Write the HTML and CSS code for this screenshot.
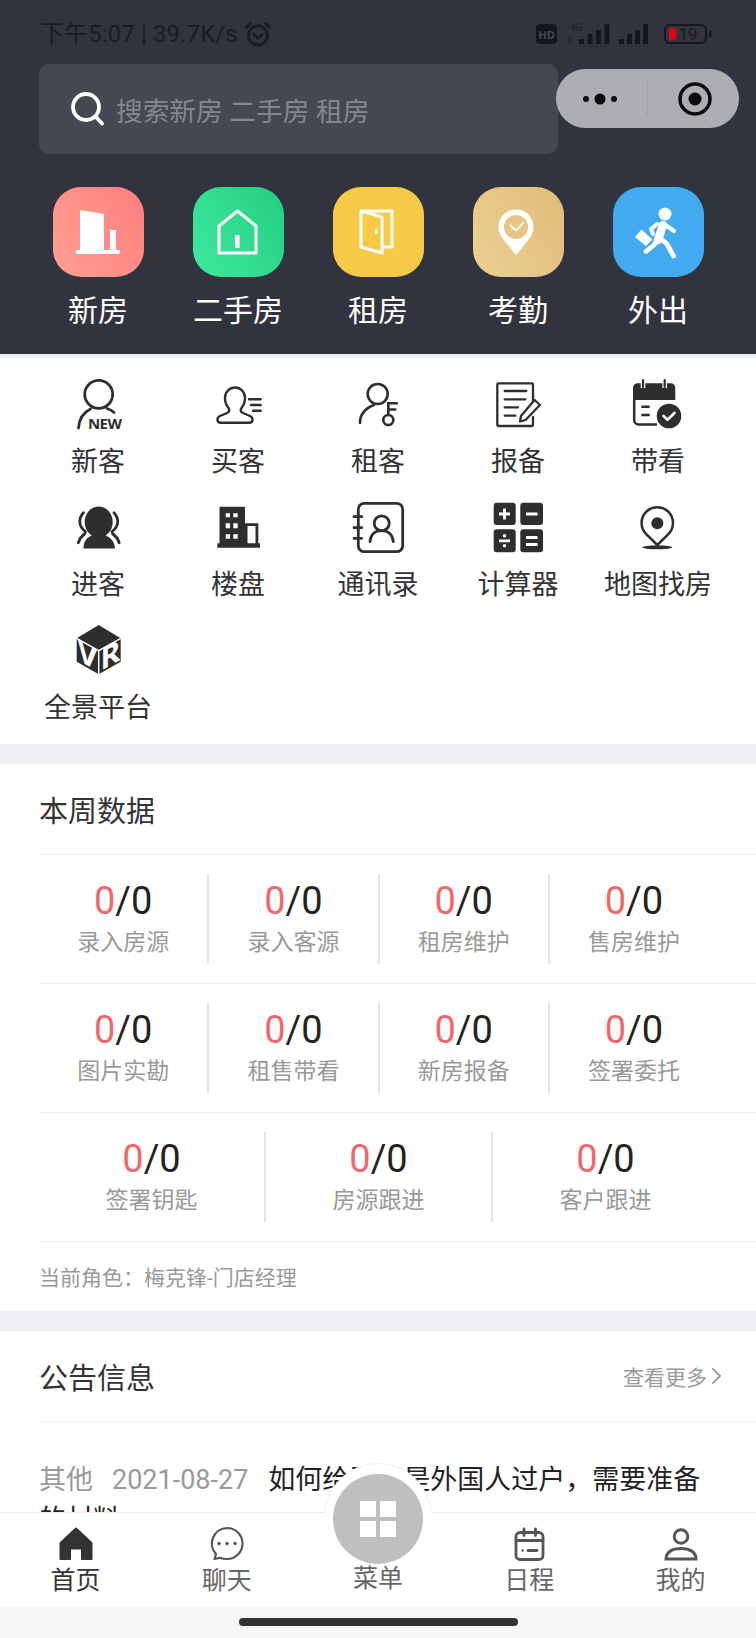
FILE: index.html
```html
<!DOCTYPE html>
<html lang="zh-CN">
<head>
<meta charset="utf-8">
<title>首页</title>
<link rel="stylesheet" href="styles.css">
</head>
<body>
<div class="app">
  <main class="content">
    <header class="hero">
      <div class="statusbar">
        <div class="status-left">
          <span>下午5:07 | 39.7K/s</span>
          <svg class="alarm" viewBox="0 0 28 28" fill="none" stroke="#1b1c22" stroke-width="2.8" stroke-linecap="round" stroke-linejoin="round"><circle cx="14" cy="15.5" r="9.5"/><path d="M9.8 14.5l4.2 4 4.2-4"/><path d="M2.5 7.5l4-4M25.500 7.500l-4-4"/></svg>
        </div>
        <svg class="status-right" viewBox="0 0 180 24" fill="none">
          <rect x="0" y="2" width="21" height="20" rx="4" fill="#15161b"/>
          <text x="10.500" y="16.500" class="hd" text-anchor="middle">HD</text>
          <text x="34" y="9" class="fourg">4G</text>
          <path d="M33 15v7M36 15v7" stroke="#1b1c22" stroke-width="1" opacity=".55"/>
          <g fill="#15161b">
            <rect x="43" y="17" width="5" height="5"/><rect x="51.500" y="12" width="5" height="10"/><rect x="60" y="8" width="5" height="14"/><rect x="68.500" y="2" width="5" height="20"/>
            <rect x="83" y="17" width="5" height="5"/><rect x="91" y="12" width="5" height="10"/><rect x="99" y="8" width="5" height="14"/><rect x="107" y="2" width="5" height="20"/>
          </g>
          <rect x="129" y="3" width="41" height="18" rx="5" stroke="#15161b" stroke-width="2"/>
          <rect x="133" y="6.500" width="7.500" height="11" fill="#e60012"/>
          <text x="142.500" y="18" class="batt">19</text>
          <rect x="173" y="9" width="2.500" height="6" rx="1" fill="#15161b"/>
        </svg>
      </div>
      <div class="search">
        <svg class="search-ico" viewBox="0 0 36 36" fill="none" stroke="#fff" stroke-width="3.800" stroke-linecap="round"><circle cx="16" cy="16" r="13"/><path d="M26 26l6 6.500"/></svg>
        <span>搜索新房 二手房 租房</span>
      </div>
      <div class="capsule">
        <svg class="dots" viewBox="0 0 44 16" fill="#0a0a0a"><circle cx="6" cy="8" r="3"/><circle cx="20" cy="8" r="5.500"/><circle cx="34" cy="8" r="3"/></svg>
        <i class="capsule-sep"></i>
        <svg class="target" viewBox="0 0 36 36" fill="none"><circle cx="18" cy="18" r="15" stroke="#0a0a0a" stroke-width="3.500"/><circle cx="18" cy="18" r="6.500" fill="#0a0a0a"/></svg>
      </div>
      <nav class="quick">
        <a class="quick-item"><span class="tile tile-new"><svg viewBox="0 0 90 90" fill="#fff"><path d="M27 23l24 4v36H27z"/><path d="M57 43h6v20h-6z"/><rect x="23" y="63" width="44" height="4" rx="1"/></svg></span><b>新房</b></a>
        <a class="quick-item"><span class="tile tile-second"><svg viewBox="0 0 90 90" fill="none" stroke="#fff" stroke-width="3" stroke-linejoin="round"><path d="M44.500 24L63 39v27H26V39z"/><rect x="42" y="48" width="4.500" height="13" fill="#fff" stroke="none"/></svg></span><b>二手房</b></a>
        <a class="quick-item"><span class="tile tile-rent"><svg viewBox="0 0 90 90" fill="none" stroke="#fff" stroke-width="3" stroke-linejoin="round"><path d="M28 24h31v36H49"/><path d="M28 24l21 6v36l-21-6z"/><rect x="42" y="42" width="2.500" height="5" rx="1" fill="#fff" stroke="none"/></svg></span><b>租房</b></a>
        <a class="quick-item"><span class="tile tile-check"><svg viewBox="0 0 90 90"><path fill="#fff" d="M43 22.500c-9.700 0-17.500 7.800-17.500 17.500 0 5 2 9.500 5.300 12.800L43 68.500l12.200-15.700c3.300-3.300 5.300-7.800 5.300-12.800 0-9.700-7.800-17.500-17.500-17.500z"/><circle cx="43" cy="40" r="12" fill="#e6c585"/><path d="M37.500 38.500l5.500 5 7.500-8" fill="none" stroke="#fff" stroke-width="1.800" stroke-linecap="round" stroke-linejoin="round"/></svg></span><b>考勤</b></a>
        <a class="quick-item"><span class="tile tile-out"><svg viewBox="0 0 90 90"><circle cx="52" cy="27" r="6.500" fill="#fff"/><path fill="#fff" d="M22 50l6.500-7.500 11 10-6.500 6.500z"/><g fill="none" stroke="#fff" stroke-linecap="round" stroke-linejoin="round"><path d="M50 38l-5 15" stroke-width="8.500"/><path d="M49 36l5 3 7 5M44 37l-6 5 2 5" stroke-width="4"/><path d="M44 53l-3 5-8 6.500M47 51l7 6 6.500 12" stroke-width="4.800"/></g></svg></span><b>外出</b></a>
      </nav>
    </header>

    <section class="menu">
      <a class="menu-item"><svg class="ico" viewBox="0 0 60 60" fill="none" stroke="#2e2e2e" stroke-width="2.800" stroke-linecap="round"><circle cx="30.700" cy="19.300" r="14"/><path d="M10.500 53c.5-9 5-15.500 12-19M39 33.500c3 .8 5 2 7 4"/><text x="20" y="54" class="new" stroke="none" fill="#2e2e2e">NEW</text></svg><span>新客</span></a>
      <a class="menu-item"><svg class="ico" viewBox="0 0 60 60" fill="none" stroke="#2e2e2e" stroke-width="2.400" stroke-linecap="round" stroke-linejoin="round"><path d="M27 12.500c-5.500 0-10 4.500-10 10.500 0 4.500 1.500 7.500 3.500 10 1.500 2 1 4-1.500 5l-7 3c-3.500 1.500-3.500 6.700.8 6.700h28.400c4.300 0 4.300-5.200.8-6.700l-7-3c-2.500-1-3-3-1.500-5 2-2.500 3.500-5.500 3.500-10 0-6-4.500-10.500-10-10.500z"/><path d="M41 24.300h11.700M43 30h9.700M45 35.700h7.700"/></svg><span>买客</span></a>
      <a class="menu-item"><svg class="ico" viewBox="0 0 60 60" fill="none" stroke="#2e2e2e" stroke-width="2.600" stroke-linecap="round"><circle cx="29.700" cy="19" r="10"/><path d="M12 48c0-9 6-15 14-18"/><circle cx="40.300" cy="45" r="5"/><path d="M40.300 40V28.300h8.500M40.300 34.500h7"/></svg><span>租客</span></a>
      <a class="menu-item"><svg class="ico" viewBox="0 0 60 60" fill="none" stroke="#2e2e2e" stroke-width="2.300" stroke-linecap="round" stroke-linejoin="round"><path d="M45 26V9.500c0-.7-.5-1.200-1.200-1.200H10.500c-.7 0-1.200.5-1.200 1.200v40.300c0 .7.500 1.200 1.200 1.200h33.300c.7 0 1.200-.5 1.200-1.200V42"/><path d="M16.700 16h21.600M16.700 24.300h20.600M16.700 32.300h13.300M16.700 40.700h10.600"/><path d="M46.500 25l5.500 5-14.500 15-5.500 1.500 1-5.500z"/></svg><span>报备</span></a>
      <a class="menu-item"><svg class="ico" viewBox="0 0 60 60" fill="none"><path d="M5 25V13c0-2.700 2-4.700 4.700-4.700h33c2.700 0 4.600 2 4.600 4.700v12z" fill="#2e2e2e"/><path d="M15 5v8M36.700 5v8" stroke="#fff" stroke-width="4.500"/><path d="M15 5v7M36.700 5v7" stroke="#2e2e2e" stroke-width="2.200" stroke-linecap="round"/><path d="M6.200 25v20c0 2.500 1.800 4.500 4.500 4.500H29" stroke="#2e2e2e" stroke-width="2.500"/><path d="M13.300 31.700h8.400M13.300 40h8.400" stroke="#2e2e2e" stroke-width="2.500"/><circle cx="41" cy="41" r="12.300" fill="#2e2e2e"/><path d="M35.500 41l4 3.800 7-6.800" stroke="#fff" stroke-width="2.600" stroke-linecap="round" stroke-linejoin="round"/></svg><span>带看</span></a>

      <a class="menu-item"><svg class="ico" viewBox="0 0 60 60"><ellipse cx="30.700" cy="24" rx="14" ry="15.500" fill="#2e2e2e"/><path fill="#2e2e2e" d="M15.500 50.500c0-8 4-11.500 10-13.500 3.500 1.500 7 1.500 10.500 0 6 2 10.500 5.500 11 13.500z"/><path d="M15.500 14.700c-5.500 6-5 13.500 2 19M17 35.500c-3 2.200-5.300 5-6.700 9.200M46 14.700c5.500 6 5 13.500-2 19M44.500 35.500c3 2.200 5.300 5 6.700 9.200" fill="none" stroke="#2e2e2e" stroke-width="2.800" stroke-linecap="round" stroke-linejoin="round"/></svg><span>进客</span></a>
      <a class="menu-item"><svg class="ico" viewBox="0 0 60 60"><path fill="#2e2e2e" d="M12.500 8.700h23.500c.6 0 1 .4 1 1V25.300h13.300v20H52v4.400H9.300v-4.400h2.200V9.700c0-.6.400-1 1-1z"/><path fill="#fff" d="M17.700 15.300H22v4h-4.300zM25.300 15.300h4.400v4h-4.400zM17.700 25.300H22v5h-4.300zM25.300 25.300h4.400v5h-4.400zM17.700 36.300H22v4.500h-4.300zM25.300 36.300h4.400v4.500h-4.400zM39.500 28h8v17.300h-8z"/></svg><span>楼盘</span></a>
      <a class="menu-item"><svg class="ico" viewBox="0 0 60 60" fill="none" stroke="#2e2e2e" stroke-width="2.800" stroke-linecap="round"><rect x="10.300" y="5.300" width="44.400" height="48.400" rx="6"/><path d="M6 18.700h7.700M6 29.700h7.700M6 40.300h7.700"/><circle cx="33.700" cy="25.300" r="7.500"/><path d="M22 43.700c.5-7 5-11 11.500-11s11.300 4 11.800 11"/></svg><span>通讯录</span></a>
      <a class="menu-item"><svg class="ico" viewBox="0 0 60 60"><rect x="5.700" y="4.700" width="22" height="22.300" rx="3" fill="#2e2e2e"/><rect x="32.300" y="4.700" width="22.700" height="22.300" rx="3" fill="#2e2e2e"/><rect x="5.700" y="31.300" width="22" height="23" rx="3" fill="#2e2e2e"/><rect x="32.300" y="31.300" width="22.700" height="23" rx="3" fill="#2e2e2e"/><path d="M11 16h11M16.500 10.500v11M38 16h11.500M11 42.800h11M38 39.500h11.500M38 46.500h11.500" stroke="#fff" stroke-width="2.800"/><circle cx="16.500" cy="37.800" r="1.700" fill="#fff"/><circle cx="16.500" cy="47.800" r="1.700" fill="#fff"/></svg><span>计算器</span></a>
      <a class="menu-item"><svg class="ico" viewBox="0 0 60 60" fill="none"><path d="M29.300 47L18.500 36.300A15.700 15.700 0 1 1 40.100 36.300z" stroke="#2e2e2e" stroke-width="2.500" stroke-linejoin="round"/><circle cx="29.300" cy="25.300" r="6" fill="#2e2e2e"/><ellipse cx="29.300" cy="49.300" rx="15" ry="2" fill="#2e2e2e"/></svg><span>地图找房</span></a>

      <a class="menu-item"><svg class="ico" viewBox="0 0 60 60"><path fill="#2e2e2e" d="M30.700 4l22 13.300v23.400l-22 12.600-22-12.600V17.300z"/><path d="M8.700 17.300l22 12.400 22-12.400M30.700 29.700v23.600" fill="none" stroke="#fff" stroke-width="1.400"/><text class="vr" transform="matrix(1 .56 0 1 9.500 39)" fill="#fff">V</text><text class="vr" transform="matrix(1 -.56 0 1 32.500 50)" fill="#fff">R</text></svg><span>全景平台</span></a>
    </section>

    <section class="panel stats">
      <h2 class="panel-title"><span>本周数据</span></h2>
      <div class="stat-row">
        <div class="stat"><p class="num"><em>0</em>/0</p><p class="cap">录入房源</p></div>
        <div class="stat"><p class="num"><em>0</em>/0</p><p class="cap">录入客源</p></div>
        <div class="stat"><p class="num"><em>0</em>/0</p><p class="cap">租房维护</p></div>
        <div class="stat"><p class="num"><em>0</em>/0</p><p class="cap">售房维护</p></div>
      </div>
      <div class="stat-row">
        <div class="stat"><p class="num"><em>0</em>/0</p><p class="cap">图片实勘</p></div>
        <div class="stat"><p class="num"><em>0</em>/0</p><p class="cap">租售带看</p></div>
        <div class="stat"><p class="num"><em>0</em>/0</p><p class="cap">新房报备</p></div>
        <div class="stat"><p class="num"><em>0</em>/0</p><p class="cap">签署委托</p></div>
      </div>
      <div class="stat-row">
        <div class="stat"><p class="num"><em>0</em>/0</p><p class="cap">签署钥匙</p></div>
        <div class="stat"><p class="num"><em>0</em>/0</p><p class="cap">房源跟进</p></div>
        <div class="stat"><p class="num"><em>0</em>/0</p><p class="cap">客户跟进</p></div>
      </div>
      <p class="role">当前角色：梅克锋-门店经理</p>
    </section>

    <section class="panel notice">
      <h2 class="panel-title"><span>公告信息</span><a class="more">查看更多<svg viewBox="0 0 12 20" fill="none" stroke="#999" stroke-width="2" stroke-linecap="round" stroke-linejoin="round"><path d="M2 2l8 8-8 8"/></svg></a></h2>
      <p class="notice-item"><span class="tag">其他</span><span class="date">2021-08-27</span>如何给买家是外国人过户，需要准备的材料</p>
    </section>
  </main>

  <footer class="tabbar">
    <a class="tab tab-on"><svg viewBox="0 0 40 40"><path fill="#333" stroke="#333" stroke-width="2" stroke-linejoin="round" d="M20 4.500L35.500 19v16H26V24.500H14V35H4.500V19z"/></svg><span class="tab-label">首页</span></a>
    <a class="tab"><svg viewBox="0 0 40 40" fill="none" stroke="#555" stroke-width="2.200" stroke-linejoin="round"><path d="M20 4a15.500 15.500 0 0 1 0 31c-2.500 0-5-.4-7-1.300l-5.500 1.300 1.500-5A15.500 15.500 0 0 1 20 4z"/><circle cx="12" cy="19.500" r="1.700" fill="#555" stroke="none"/><circle cx="20" cy="19.500" r="1.700" fill="#555" stroke="none"/><circle cx="28" cy="19.500" r="1.700" fill="#555" stroke="none"/></svg><span class="tab-label">聊天</span></a>
    <a class="tab tab-center"><span class="fab-halo"></span><span class="fab"><svg viewBox="0 0 36 36" fill="#fff"><rect x="0" y="0" width="16" height="16"/><rect x="20" y="0" width="16" height="16"/><rect x="0" y="20" width="16" height="16"/><rect x="20" y="20" width="16" height="16"/></svg></span><span class="tab-label">菜单</span></a>
    <a class="tab"><svg viewBox="0 0 40 40" fill="none" stroke="#555" stroke-width="2.800" stroke-linecap="round"><rect x="7" y="8.500" width="27" height="27" rx="4"/><path d="M15 5v6.500M26.500 5v6.500M7 16.500h27M19 26.500h9"/><circle cx="13.500" cy="26.500" r="1.200" fill="#555" stroke="none"/></svg><span class="tab-label">日程</span></a>
    <a class="tab"><svg viewBox="0 0 40 40" fill="none" stroke="#555" stroke-width="3"><circle cx="21" cy="12.500" r="6.800"/><path d="M6 35c0-7 6.500-10.500 15-10.500S36 28 36 35z"/></svg><span class="tab-label">我的</span></a>
  </footer>
  <div class="homebar"><i></i></div>
</div>
</body>
</html>
```
FILE: styles.css
```css
* { box-sizing: border-box; margin: 0; padding: 0; }
html, body { width: 756px; height: 1638px; overflow: hidden; background: #fff; }
body { font-family: Roboto, "Noto Sans CJK SC", sans-serif; color: #333; }
a { color: inherit; text-decoration: none; }
em, b, i { font-style: normal; font-weight: 400; }

.app { width: 756px; height: 1638px; display: flex; flex-direction: column; position: relative; }
.content { flex: 1; min-height: 0; overflow: hidden; background: #efeff3; }

.hero { position: relative; height: 358px; background: #31333f; border-bottom: 4px solid #eef1f1; padding-top: 15px; }
.statusbar { height: 38px; padding: 0 40px; display: flex; align-items: center; justify-content: space-between; }
.status-left { display: flex; align-items: center; gap: 6px; font-size: 24px; letter-spacing: .1px; line-height: 38px; color: #1b1c22; }
.alarm { width: 28px; height: 28px; }
.status-right { width: 180px; height: 24px; }
.hd { font: 700 11px "Open Sans", sans-serif; fill: #454753; }
.fourg { font: 400 10px Roboto, sans-serif; fill: #1b1c22; opacity: .8; }
.batt { font: 400 17px Roboto, sans-serif; fill: #1b1c22; }

.search { width: 519px; height: 90px; margin: 11px 0 0 39px; background: #454753; border-radius: 10px; display: flex; align-items: center; padding-left: 31px; gap: 10px; font-size: 26.700px; color: #85868e; }
.search-ico { width: 36px; height: 36px; }

.capsule { position: absolute; left: 556px; top: 69px; width: 183px; height: 59px; border-radius: 30px; background: #adaeb1; display: flex; align-items: center; }
.dots { width: 44px; height: 16px; margin-left: 24px; }
.capsule-sep { width: 1px; height: 34px; margin-left: 23px; background: #a0a1a4; }
.target { width: 36px; height: 36px; margin-left: 29px; }

.quick { display: grid; grid-template-columns: repeat(5, 140px); padding: 0 28px; margin-top: 33px; }
.quick-item { display: flex; flex-direction: column; align-items: center; }
.quick-item b { display: block; margin-top: 14px; font-size: 30px; line-height: 40px; color: #fff; }
.tile { display: block; width: 91px; height: 90px; border-radius: 28px; }
.tile svg { display: block; width: 90px; height: 90px; }
.tile-new { background: linear-gradient(60deg, #ff9f90, #ff7f80); }
.tile-second { background: linear-gradient(60deg, #3eea9f, #26cd80); }
.tile-rent { background: #f6c947; }
.tile-check { background: linear-gradient(60deg, #ead194, #e2bb78); }
.tile-out { background: #42abf0; }

.menu { background: #fff; height: 386px; padding: 17px 28px; display: grid; grid-template-columns: repeat(5, 140px); grid-auto-rows: 107px; row-gap: 16px; }
.menu-item { display: flex; flex-direction: column; align-items: center; }
.menu-item span { margin-top: 7px; font-size: 27px; line-height: 40px; color: #333; white-space: nowrap; }
.ico { display: block; width: 60px; height: 60px; }
.new { font: 700 15px "Open Sans", sans-serif; letter-spacing: -.6px; }
.vr { font: 700 30px "Open Sans", sans-serif; }

.panel { background: #fff; margin-top: 20px; }
.panel-title { margin-left: 39px; height: 91px; border-bottom: 1px solid #eee; font-weight: 400; font-size: 29px; color: #333; display: flex; align-items: center; justify-content: space-between; }
.more { display: flex; align-items: center; gap: 4px; margin-right: 34px; font-size: 21px; color: #999; }
.more svg { width: 11px; height: 18px; }

.stat-row { margin-left: 39px; height: 129px; padding-top: 19px; border-bottom: 1px solid #eee; display: flex; padding-right: 38px; }
.stat { flex: 1; height: 90px; text-align: center; border-right: 2px solid #e4e4e4; }
.stat:last-child { border-right: 0; }
.num { margin-top: 2px; font-size: 38px; line-height: 50px; color: #222; }
.num em { color: #f0686c; }
.cap { font-size: 23px; line-height: 34px; color: #999; }
.role { margin-left: 39px; height: 69px; line-height: 72px; font-size: 21px; color: #999; }

.notice-item { padding: 38px 40px 0 39px; font-size: 27px; line-height: 40px; color: #222; }
.tag { color: #999; margin-right: 19px; }
.date { color: #999; margin-right: 20px; }

.tabbar { position: relative; z-index: 1; flex: none; height: 95px; background: #fff; border-top: 1px solid #eee; display: grid; grid-template-columns: repeat(5, 1fr); }
.tab { position: relative; display: flex; flex-direction: column; align-items: center; padding-top: 11px; color: #666; }
.tab > svg { display: block; width: 40px; height: 40px; }
.tab-label { font-size: 25px; line-height: 34px; }
.tab-on { color: #333; }
.tab-center { padding-top: 0; }
.fab-halo { position: absolute; left: 50%; top: -50px; width: 108px; height: 108px; margin-left: -54px; border-radius: 50%; background: #fff; border: 1px solid #eee; clip-path: inset(0 0 58px 0); }
.fab { position: absolute; left: 50%; top: -39px; width: 90px; height: 90px; margin-left: -45px; border-radius: 50%; background: #bfbfbf; display: flex; align-items: center; justify-content: center; }
.fab svg { display: block; width: 36px; height: 36px; }
.tab-center .tab-label { margin-top: 49px; }

.homebar { flex: none; height: 31px; background: #f6f6f6; display: flex; justify-content: center; padding-top: 11px; }
.homebar i { display: block; width: 279px; height: 8px; border-radius: 4px; background: #333; }
```
